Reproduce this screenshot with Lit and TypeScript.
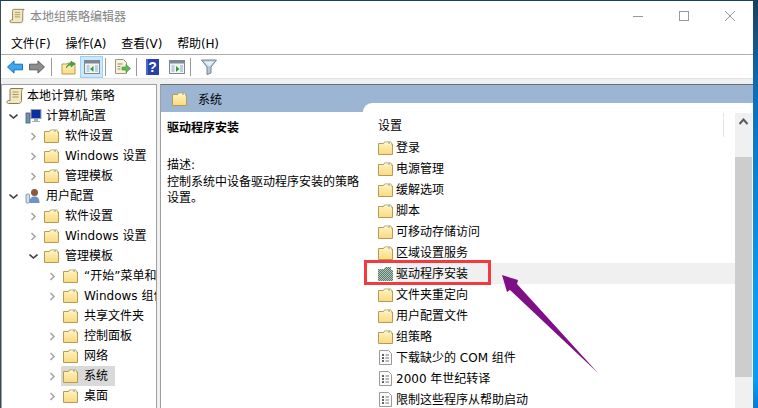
import { LitElement, html, css, svg } from "lit";
import { customElement } from "lit/decorators.js";

const folderShape = svg`<path d="M.5 13.500V2.500h5l1-1.500h6.500v2h1.500v10.500z" fill="url(#fg)" stroke="#b99a55"/><path d="M7 1.500h6v2H7z" fill="#fff4c4"/><rect x="10" y="1.500" width="2" height="1" fill="#4aa3e0"/>`;
const folder = () => html`<svg class="ico" width="15" height="14" viewBox="0 0 15 14">${folderShape}</svg>`;
const folderSel = () => html`<svg class="ico" width="15" height="14" viewBox="0 0 15 14" shape-rendering="crispEdges"><path d="M0 14V2h6l1-2h6v3h2v11z" fill="url(#chk)"/></svg>`;
const doc = () => html`<svg class="ico" width="13" height="15" viewBox="0 0 13 15"><path d="M.5.500h9l3 3v11H.5z" fill="#fafafa" stroke="#9a9a9a"/><path d="M3 5h2M3 8h2M3 11h2" stroke="#333" stroke-width="1.500"/><path d="M6.500 5H10M6.500 8H10M6.500 11H10" stroke="#777"/></svg>`;
const scroll = (s: number) => html`<svg class="ico" width="${s}" height="${s}" viewBox="0 0 18 18"><path d="M5 1.500h12c-1.500 1-1.500 3-1.500 4v8c0 2-1.500 3-3 3H2.500c-2 0-2-3 0-3H4V4c0-1.500 0-2.500 1-2.500z" fill="#f3e7bf" stroke="#8a7a50"/><path d="M6.500 5h6M6.500 7.500h6M6.500 10h6" stroke="#a59468"/></svg>`;
const chevR = () => html`<svg class="chev" width="9" height="9" viewBox="0 0 9 9"><path d="M2.500 1l3.500 3.500L2.500 8" fill="none" stroke="#a6a6a6" stroke-width="1.600"/></svg>`;
const chevD = () => html`<svg class="chev" width="9" height="9" viewBox="0 0 9 9"><path d="M.5 2.500L4.500 6l4-3.500" fill="none" stroke="#404040" stroke-width="1.600"/></svg>`;
const computer = () => html`<svg class="ico" width="17" height="17" viewBox="0 0 17 17"><rect x="6" y="1.500" width="10" height="9" fill="#0a2fa0" stroke="#9aa4b0"/><path d="M9 11h4v2h2v1H7v-1h2z" fill="#a8b0ba"/><rect x="1" y="5" width="4" height="10" fill="#7d8ea3" stroke="#4a5a70" stroke-width=".8"/><rect x="2" y="11" width="2" height="3" fill="#35b0c8"/></svg>`;
const user = () => html`<svg class="ico" width="17" height="17" viewBox="0 0 17 17"><circle cx="9.500" cy="4.500" r="3.500" fill="#8a5a3a"/><path d="M4.500 15c0-5 2-6.500 5-6.500s5 1.500 5 6.500z" fill="#6f93c8"/><rect x="1" y="6" width="3.500" height="9" rx="1" fill="#cfe0ee" stroke="#6d89a6" stroke-width=".8"/></svg>`;

const winFrame = (inner: unknown) => html`<svg width="16" height="14" viewBox="0 0 16 14"><rect x=".5" y=".5" width="15" height="13" fill="#f4f4f4" stroke="#7d8894"/><rect x="1" y="1" width="14" height="2.500" fill="#7d8894"/><rect x="2.500" y="5" width="3" height="7" fill="#b8d0e6"/><rect x="11" y="5" width="3" height="7" fill="#b8d0e6"/>${inner}</svg>`;

type Node = { t: string; d: number; c?: "r" | "d"; i?: "pc" | "user"; sel?: boolean };
const tree: Node[] = [
  { t: "软件设置", d: 2, c: "r" },
  { t: "Windows 设置", d: 2, c: "r" },
  { t: "管理模板", d: 2, c: "r" },
  { t: "用户配置", d: 1, c: "d", i: "user" },
  { t: "软件设置", d: 2, c: "r" },
  { t: "Windows 设置", d: 2, c: "r" },
  { t: "管理模板", d: 2, c: "d" },
  { t: "“开始”菜单和任务栏", d: 3, c: "r" },
  { t: "Windows 组件", d: 3, c: "r" },
  { t: "共享文件夹", d: 3 },
  { t: "控制面板", d: 3, c: "r" },
  { t: "网络", d: 3, c: "r" },
  { t: "系统", d: 3, c: "r", sel: true },
  { t: "桌面", d: 3, c: "r" },
];
const items: { t: string; k: "f" | "s" | "d" }[] = [
  { t: "登录", k: "f" }, { t: "电源管理", k: "f" }, { t: "缓解选项", k: "f" }, { t: "脚本", k: "f" },
  { t: "可移动存储访问", k: "f" }, { t: "区域设置服务", k: "f" }, { t: "驱动程序安装", k: "s" },
  { t: "文件夹重定向", k: "f" }, { t: "用户配置文件", k: "f" }, { t: "组策略", k: "f" },
  { t: "下载缺少的 COM 组件", k: "d" }, { t: "2000 年世纪转译", k: "d" }, { t: "限制这些程序从帮助启动", k: "d" },
];

@customElement("app-root")
export class AppRoot extends LitElement {
  static styles = css`
    :host { display: block; width: 758px; height: 408px; overflow: hidden; position: relative;
      background: linear-gradient(#17405f 0, #0f6cb8 90px, #0a9cf5 300px, #0a9cf5 380px, #0a78d8 408px);
      font: 12px "DejaVu Sans", "Noto Sans CJK SC", sans-serif; color: #000; }
    .defs { position: absolute; width: 0; height: 0; }
    .win { box-sizing: border-box; width: 753px; height: 408px; margin-top: 1px; border-left: 1px solid #3a4a58;
      background: #fff; display: flex; flex-direction: column; }
    .title { height: 30px; display: flex; align-items: center; padding-left: 8px; gap: 5px; color: #858585; flex: none; }
    .title .tt { padding-bottom: 2px; }
    .title .sp { flex: 1; }
    .wb { width: 46px; height: 30px; margin-left: -5px; display: flex; align-items: center; justify-content: center; }
    .menu { height: 23px; display: flex; align-items: center; padding-left: 10px; gap: 15px; border-bottom: 1px solid #adadad; flex: none; }
    .menu span { letter-spacing: -.15px; }
    .tools { height: 23px; display: flex; align-items: center; padding-left: 5px; flex: none; }
    .tb { width: 17px; height: 18px; display: flex; align-items: center; justify-content: center; flex: none; }
    .tb.act { width: 21px; height: 20px; background: #cce8ff; border: 1px solid #99d1ff; margin-left: 3px; }
    .m5 { margin-left: 5px; } .m7 { margin-left: 7px; }
    .sep { width: 1px; height: 18px; background: #9a9a9a; flex: none; }
    .s1 { margin-left: 6px; margin-right: 8px; } .s2 { margin-left: 2px; margin-right: 8px; }
    .s3 { margin-left: 5px; margin-right: 7px; } .s4 { margin-left: 5px; margin-right: 9px; }
    .main { flex: 1; min-height: 0; background: #f0f0f0; border-top: 1px solid #e3e3e3; padding-top: 5px; display: flex; gap: 3px; }
    .treep { width: 156px; flex: none; background: #fff; border: 1px solid #a0a0a0; border-bottom: 0; box-sizing: border-box; overflow: hidden; padding-top: 1px; }
    .row { height: 20px; display: flex; align-items: center; white-space: nowrap; overflow: hidden; flex: none; }
    .row .ico { flex: none; }
    .row .lab { line-height: 18px; padding: 0 1px; }
    .cs { width: 9px; height: 9px; display: flex; flex: none; }
    .d0 { padding-left: 4px; gap: 2px; }
    .d1 { padding-left: 7px; }
    .d1 .cs { margin-right: 7px; } .d1 .ico { margin-right: 3px; }
    .d2 { padding-left: 27px; } .d2 .cs { margin-right: 6px; } .d2 .ico { margin-right: 5px; }
    .d3 { padding-left: 46px; } .d3 .cs { margin-right: 6px; } .d3 .ico { margin-right: 5px; }
    .seln { background: #d9d9d9; width: 52px; height: 20px; display: flex; align-items: center; margin-left: -2px; padding-left: 2px; flex: none; }
    .seln .ico { margin-right: 5px; }
    .rp { flex: 1; min-width: 0; background: #fff; border-left: 1px solid #a0a0a0; border-top: 1px solid #6e6e6e; display: flex; flex-direction: column; }
    .hd { height: 27px; flex: none; background: #9bb5d3; display: flex; align-items: center; padding-left: 11px; gap: 11px; }
    .body { flex: 1; min-height: 0; display: flex; }
    .desc { width: 202px; flex: none; box-sizing: border-box; padding: 8px 0 0 6px; line-height: 16px; }
    .desc b { display: block; margin-bottom: 21px; font-size: 12px; }
    .desc div { width: 196px; }
    .desc .lead { margin-bottom: 1px; }
    .list { flex: 1; min-width: 0; margin-top: -9px; background: #fff; border-top-left-radius: 9px; position: relative; display: flex; }
    .cols { flex: 1; min-width: 0; padding-top: 11px; }
    .cap { height: 20px; padding-left: 15px; display: flex; align-items: center; margin-bottom: 3px; }
    .it { height: 21px; display: flex; align-items: center; padding-left: 15px; white-space: nowrap; }
    .it .ico { margin-right: 3px; flex: none; }
    .it .doc { width: 15px; display: flex; justify-content: center; margin-right: 3px; }
    .it .doc .ico { margin: 0; }
    .it .lab { flex: 1; line-height: 19px; padding-top: 2px; }
    .it.cur .lab { background: #f0f0f0; }
    .sb { width: 17px; flex: none; margin-top: 10px; background: #f0f0f0; display: flex; flex-direction: column; margin-right: 1px; }
    .up { height: 17px; display: flex; align-items: center; justify-content: center; flex: none; }
    .gap { height: 27px; flex: none; }
    .thumb { height: 220px; background: #cdcdcd; flex: none; }
    .div { position: absolute; right: 29px; top: 10px; width: 1px; height: 24px; background: #e5e5e5; }
    .mark { position: absolute; left: 364px; top: 260px; width: 127px; height: 25px; box-sizing: border-box; border: 3px solid #f23a3f; }
    .arrow { position: absolute; left: 490px; top: 265px; }
  `;

  render() {
    return html`
      <svg class="defs"><defs>
        <linearGradient id="fg" x1="0" y1="0" x2="0" y2="1"><stop offset="0" stop-color="#fff3c0"/><stop offset="1" stop-color="#f9da80"/></linearGradient>
        <pattern id="chk" width="2" height="2" patternUnits="userSpaceOnUse"><rect width="2" height="2" fill="#dcc060"/><rect width="1" height="1" fill="#2f7fc8"/><rect x="1" y="1" width="1" height="1" fill="#2f7fc8"/></pattern>
      </defs></svg>
      <div class="win">
        <div class="title">
          ${scroll(16)}<span class="tt">本地组策略编辑器</span><span class="sp"></span>
          <span class="wb"><svg width="10" height="1"><rect width="10" height="1" fill="#999"/></svg></span>
          <span class="wb"><svg width="10" height="10"><rect x=".5" y=".5" width="9" height="9" fill="none" stroke="#999"/></svg></span>
          <span class="wb"><svg width="10" height="10"><path d="M0 0l10 10M10 0L0 10" stroke="#999"/></svg></span>
        </div>
        <div class="menu"><span>文件(F)</span><span>操作(A)</span><span>查看(V)</span><span>帮助(H)</span></div>
        <div class="tools">
          <span class="tb"><svg width="16" height="14" viewBox="0 0 17 14"><path d="M.5 7L7.500 .5v3.500h9v6h-9v3.500z" fill="#3aa7f0" stroke="#1668b0"/></svg></span>
          <span class="tb m5"><svg width="16" height="14" viewBox="0 0 17 14"><path d="M16.500 7L9.500 .5v3.500H.5v6h9v3.500z" fill="#8d8d8d" stroke="#5a5a5a"/></svg></span>
          <span class="sep s1"></span>
          <span class="tb"><svg width="16" height="16" viewBox="0 0 16 16"><path d="M1 15V5h5l1-1h7v11z" fill="url(#fg)" stroke="#b99a55"/><path d="M5 9c1-3 3-5 5-5V2l4 3-4 3V6C8 6 7 7 5 9z" fill="#45a845" stroke="#2b7a2b" stroke-width=".5"/></svg></span>
          <span class="tb act">${winFrame(svg`<path d="M9.500 6v6L6 9z" fill="#2fa030"/>`)}</span>
          <span class="sep s2"></span>
          <span class="tb"><svg width="17" height="16" viewBox="0 0 17 16"><path d="M1.500.5h8l3 3v11h-11z" fill="#f7f2d8" stroke="#9a9a80"/><path d="M3.500 5h5M3.500 7.500h3M3.500 10h3" stroke="#8a8a70"/><path d="M8 8h4V5.500l4.500 4-4.500 4V11H8z" fill="#5cb85c" stroke="#3a8a3a" stroke-width=".6"/></svg></span>
          <span class="sep s3"></span>
          <span class="tb"><svg width="13" height="16" viewBox="0 0 13 16"><rect width="13" height="16" fill="#2742a8"/><rect x="0" y="0" width="2" height="16" fill="#4a68c8"/><text x="6.500" y="13" text-anchor="middle" font-family="Liberation Sans" font-size="14" font-weight="700" fill="#fff">?</text></svg></span>
          <span class="tb m7">${winFrame(svg`<path d="M7 6v6l3.500-3z" fill="#2fa030"/>`)}</span>
          <span class="sep s4"></span>
          <span class="tb"><svg width="16" height="16" viewBox="0 0 16 16"><path d="M.5 1h15L10 8v6l-4 1.500V8z" fill="#b4c8d8" stroke="#6f8596"/><path d="M3 2.500h10L9 7H7z" fill="#e4eef5"/></svg></span>
        </div>
        <div class="main">
          <div class="treep">
            <div class="row d0">${scroll(18)}<span class="lab">本地计算机 策略</span></div>
            <div class="row d1"><span class="cs">${chevD()}</span>${computer()}<span class="lab">计算机配置</span></div>
            ${tree.map((n) => html`<div class="row d${n.d}">
              <span class="cs">${n.c === "r" ? chevR() : n.c === "d" ? chevD() : ""}</span>
              ${n.sel
                ? html`<span class="seln">${folder()}<span class="lab">${n.t}</span></span>`
                : html`${n.i === "user" ? user() : folder()}<span class="lab">${n.t}</span>`}
            </div>`)}
          </div>
          <div class="rp">
            <div class="hd">${folder()}<span>系统</span></div>
            <div class="body">
              <div class="desc"><b>驱动程序安装</b><div class="lead">描述:</div><div>控制系统中设备驱动程序安装的策略设置。</div></div>
              <div class="list">
                <div class="cols">
                  <div class="cap">设置</div>
                  ${items.map((i) => html`<div class="it ${i.k === "s" ? "cur" : ""}">
                    ${i.k === "d" ? html`<span class="doc">${doc()}</span>` : i.k === "s" ? folderSel() : folder()}
                    <span class="lab">${i.t}</span>
                  </div>`)}
                </div>
                <div class="div"></div>
                <div class="sb">
                  <div class="up"><svg width="9" height="7" viewBox="0 0 9 7"><path d="M.5 6L4.500 1.500 8.500 6" fill="none" stroke="#5a5a5a" stroke-width="2"/></svg></div>
                  <div class="gap"></div>
                  <div class="thumb"></div>
                </div>
              </div>
            </div>
          </div>
        </div>
      </div>
      <div class="mark"></div>
      <svg class="arrow" width="115" height="115" viewBox="0 0 115 115"><path d="M12 10L28 15 27 19 108 108 20 25 17 27z" fill="#7f0f87"/></svg>
    `;
  }
}
